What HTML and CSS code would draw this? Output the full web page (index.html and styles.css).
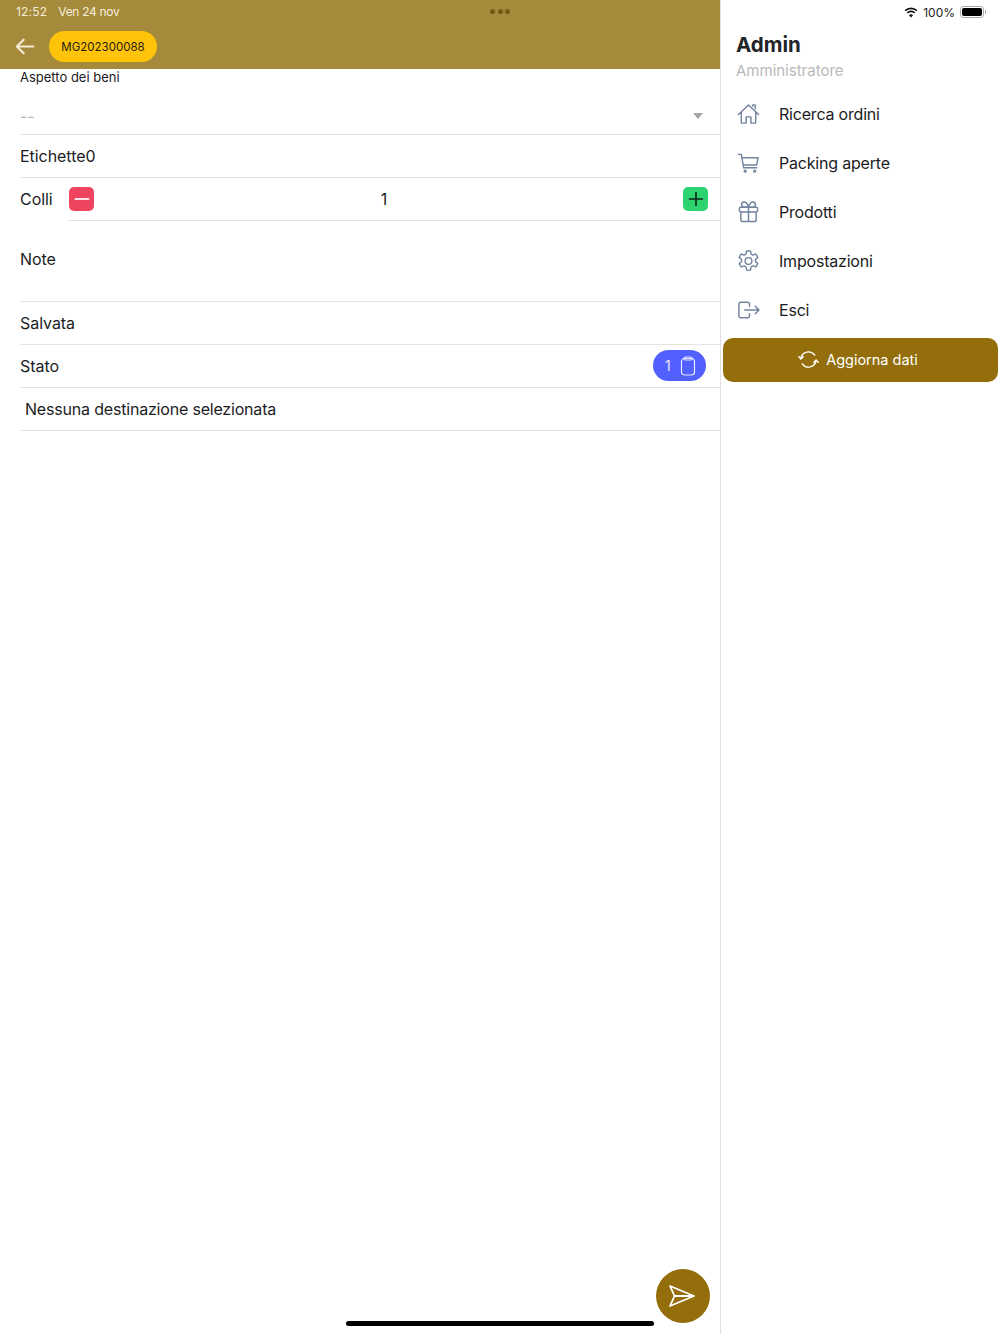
FILE: index.html
```html
<!DOCTYPE html>
<html lang="it">
<head>
    <meta charset="UTF-8">
    <meta name="viewport" content="width=device-width, initial-scale=1.0">
    <title>Packing</title>
    <link rel="stylesheet" href="styles.css">
</head>
<body>
    <div class="screen">
        <div class="main-pane">
            <header class="topbar">
                <div class="status-left"><span class="status-time">12:52</span><span class="status-date">Ven 24 nov</span></div>
                <div class="topbar-row">
                    <svg class="back-icon" viewBox="0 0 22 18" width="20" height="17" fill="none" stroke="#f3ead2" stroke-width="2.400" stroke-linecap="round" stroke-linejoin="round">
                        <path d="M20 9H2M9.500 1.500 2 9l7.500 7.500"/>
                    </svg>
                    <span class="order-pill">MG202300088</span>
                </div>
            </header>

            <div class="form">
                <div class="select-field">
                    <label class="select-label">Aspetto dei beni</label>
                    <div class="select-value">
                        <span class="placeholder">--</span>
                        <span class="caret"></span>
                    </div>
                </div>
                <div class="row">Etichette0</div>
                <div class="row row-colli">
                    <span class="colli-label">Colli</span>
                    <div class="stepper">
                        <button class="step step-minus"><svg viewBox="0 0 16 16" width="16" height="16" stroke="#fbe3e7" stroke-width="1.800" stroke-linecap="round"><path d="M1.500 8h13"/></svg></button>
                        <span class="step-value">1</span>
                        <button class="step step-plus"><svg viewBox="0 0 16 16" width="16" height="16" stroke="#10241a" stroke-width="1.600" stroke-linecap="round"><path d="M1.500 8h13M8 1.500v13"/></svg></button>
                    </div>
                </div>
                <div class="row row-note">Note</div>
                <div class="row">Salvata</div>
                <div class="row row-stato">
                    <span>Stato</span>
                    <span class="stato-pill">
                        1
                        <svg viewBox="0 0 16 20" width="16" height="20" fill="none" stroke="#e6e9ff" stroke-width="1.200" stroke-linejoin="round">
                            <rect x="1.500" y="2.500" width="13" height="16.500" rx="3"/>
                            <rect x="4" y="1" width="8" height="3" rx="1.500"/>
                        </svg>
                    </span>
                </div>
                <div class="row row-dest">Nessuna destinazione selezionata</div>
            </div>
        </div>

        <aside class="side-pane">
            <div class="status-right">
                <svg class="wifi" viewBox="0 0 16 12" width="14" height="11" fill="#111">
                    <path d="M8 2.200c2.300 0 4.400.9 6 2.400l1.300-1.400A10.600 10.600 0 0 0 8 .2 10.600 10.600 0 0 0 .7 3.200L2 4.600a8.700 8.700 0 0 1 6-2.400Z"/>
                    <path d="M8 5.700c1.300 0 2.500.5 3.500 1.400l1.300-1.400A7 7 0 0 0 8 3.800a7 7 0 0 0-4.800 1.900l1.300 1.400c1-.9 2.200-1.400 3.500-1.400Z"/>
                    <path d="M8 11.600 10.300 9A3.300 3.300 0 0 0 8 8.100c-.9 0-1.700.3-2.300.9L8 11.600Z"/>
                </svg>
                <span>100%</span>
                <span class="battery"><span class="battery-fill"></span></span>
            </div>
            <div class="user">
                <h2>Admin</h2>
                <p>Amministratore</p>
            </div>
            <ul class="menu">
                <li>
                    <svg viewBox="0 0 24 24" width="23" height="24"><path d="M1.500 12.500 12 2.500l10.500 10M4.500 10v11.500h5V15h5v6.500h5V10M16.500 4V2.500h2.500v4"/></svg>
                    Ricerca ordini
                </li>
                <li>
                    <svg viewBox="0 0 24 24" width="23" height="24"><path d="M1.500 3h3l2.500 14h13.500M5.200 6.500H22l-1.500 7.500H6.500"/><circle cx="8.500" cy="20.500" r="1"/><circle cx="18.500" cy="20.500" r="1"/></svg>
                    Packing aperte
                </li>
                <li>
                    <svg viewBox="0 0 24 24" width="23" height="24"><rect x="2.500" y="7" width="19" height="5" rx="1.500"/><path d="M4 12v8a2 2 0 0 0 2 2h12a2 2 0 0 0 2-2v-8M12 7v15M12 7S10.500 1.500 7.500 1.500a2.700 2.700 0 0 0 0 5.500H12Zm0 0s1.500-5.500 4.500-5.500a2.700 2.700 0 0 1 0 5.500H12Z"/></svg>
                    Prodotti
                </li>
                <li>
                    <svg viewBox="0 0 24 24" width="23" height="24"><circle cx="12" cy="12" r="3.500"/><path d="M10 1.500h4l.7 3.300 1.800 1 3.200-1.100 2 3.500-2.500 2.200v2.100l2.500 2.200-2 3.500-3.200-1.100-1.800 1-.7 3.400h-4l-.7-3.400-1.800-1-3.200 1.100-2-3.500 2.500-2.200v-2.100L2.300 8.200l2-3.500 3.200 1.100 1.800-1L10 1.500Z"/></svg>
                    Impostazioni
                </li>
                <li>
                    <svg viewBox="0 0 24 24" width="23" height="24"><path d="M13 8V6a2 2 0 0 0-2-2H4a2 2 0 0 0-2 2v12a2 2 0 0 0 2 2h7a2 2 0 0 0 2-2v-2M8 12h15M19 8l4 4-4 4"/></svg>
                    Esci
                </li>
            </ul>
            <button class="refresh">
                <svg viewBox="0 0 22 22" width="21" height="21" fill="none" stroke="#fff" stroke-width="1.500" stroke-linecap="round" stroke-linejoin="round">
                    <path d="M3 10a8 8 0 0 1 14.500-3.500M19 12a8 8 0 0 1-14.500 3.500"/>
                    <path d="m.8 8 2.200 2.500L5.400 8.200M21.200 14 19 11.500l-2.400 2.300"/>
                </svg>
                Aggiorna dati
            </button>
        </aside>

        <div class="multitask-dots"><i></i><i></i><i></i></div>
        <button class="fab">
            <svg viewBox="0 0 26 24" width="26" height="24" fill="none" stroke="#fff" stroke-width="1.800" stroke-linejoin="round">
                <path d="M1 2 25 12 1 22 5.500 12 1 2ZM5.500 12H25"/>
            </svg>
        </button>
        <div class="home-bar"></div>
    </div>
</body>
</html>
```

FILE: styles.css
```css
* { margin: 0; padding: 0; box-sizing: border-box; }

body {
    font-family: Inter, "Liberation Sans", sans-serif;
    color: #1c1c1e;
    background: #fff;
}

.screen {
    display: grid;
    grid-template-columns: 721px 1fr;
    width: 1000px;
    height: 1334px;
    position: relative;
    overflow: hidden;
}

.main-pane { border-right: 1px solid #e0e0e0; }

.topbar {
    height: 69px;
    background: #a68a3b;
    padding: 4px 0 0 16px;
}

.status-left {
    display: flex;
    gap: 11px;
    height: 16px;
    font-size: 12px;
    line-height: 16px;
    color: #f5eedb;
}

.status-time { letter-spacing: 0.2px; }
.status-date { letter-spacing: -0.3px; }

.topbar-row {
    display: flex;
    align-items: center;
    gap: 14px;
    margin: 11px 0 0 -1px;
}

.order-pill {
    display: flex;
    align-items: center;
    justify-content: center;
    width: 108px;
    height: 31px;
    border-radius: 16px;
    background: #ffc40a;
    color: #1d1a0c;
    font-size: 11.500px;
}

.form { padding-left: 20px; }

.select-field {
    height: 66px;
    border-bottom: 1px solid #e4e4e4;
}

.select-label {
    display: block;
    font-size: 13px;
    line-height: 17px;
}

.select-value {
    display: flex;
    justify-content: space-between;
    align-items: center;
    margin-top: 20px;
    padding-right: 17px;
    height: 20px;
}

.placeholder {
    color: #b8b8b8;
    font-size: 16px;
}

.caret {
    width: 0;
    height: 0;
    border-left: 5px solid transparent;
    border-right: 5px solid transparent;
    border-top: 6px solid #a5a5a5;
}

.row {
    display: flex;
    align-items: center;
    justify-content: space-between;
    height: 43px;
    font-size: 16px;
    letter-spacing: -0.05px;
    border-bottom: 1px solid #e4e4e4;
}

.row-colli {
    border-bottom: 0;
    justify-content: flex-start;
}

.colli-label {
    width: 48px;
    padding-bottom: 1px;
}

.stepper {
    flex: 1;
    height: 43px;
    display: flex;
    align-items: center;
    justify-content: space-between;
    padding: 0 12px 1px 1px;
    border-bottom: 1px solid #e4e4e4;
}

.step {
    display: flex;
    align-items: center;
    justify-content: center;
    width: 25px;
    height: 24px;
    border: 0;
    border-radius: 5px;
}

.step-minus { background: #ef4460; }
.step-plus { background: #2dd36f; }

.step-value {
    font-size: 16px;
    margin-right: 9px;
}

.row-note {
    height: 81px;
    align-items: flex-start;
    padding-top: 28px;
}

.row-stato { padding-right: 14px; }

.stato-pill {
    display: flex;
    align-items: center;
    justify-content: space-between;
    width: 53px;
    height: 31px;
    margin-bottom: 1px;
    padding: 0 10px 0 12px;
    border-radius: 16px;
    background: #5260ff;
    color: #e6e9ff;
    font-size: 14px;
}

.row-dest {
    padding-left: 5px;
    letter-spacing: -0.19px;
}

.side-pane { padding: 4px 2px 0; }

.status-right {
    display: flex;
    align-items: center;
    justify-content: flex-end;
    gap: 4px;
    height: 16px;
    padding-right: 14px;
    font-size: 12px;
    color: #222;
}

.wifi { margin-right: 1px; }

.battery {
    display: flex;
    position: relative;
    width: 24px;
    height: 12px;
    margin-left: 1px;
    padding: 1px;
    border: 1px solid #a5a5a5;
    border-radius: 3.500px;
}

/* battery nub */
.battery::after {
    content: '';
    position: absolute;
    right: -3px;
    top: 3px;
    width: 1.500px;
    height: 4px;
    border-radius: 0 1px 1px 0;
    background: #a5a5a5;
}

.battery-fill {
    flex: 1;
    background: #000;
    border-radius: 2px;
}

.user {
    padding: 12px 0 0 13px;
}

.user h2 {
    font-size: 20.500px;
    line-height: 26px;
    font-weight: 700;
    color: #222428;
}

.user p {
    margin-top: 3px;
    font-size: 15px;
    line-height: 20px;
    color: #b9b9bb;
}

.menu {
    list-style: none;
    margin-top: 9px;
}

.menu li {
    display: flex;
    align-items: center;
    gap: 19.500px;
    height: 48.800px;
    padding-left: 13.500px;
    font-size: 16px;
    letter-spacing: -0.2px;
    color: #1c1c1e;
}

.menu svg {
    fill: none;
    stroke: #73849f;
    stroke-width: 1.500;
    stroke-linecap: round;
    stroke-linejoin: round;
}

.refresh {
    display: flex;
    align-items: center;
    justify-content: center;
    gap: 7px;
    width: 275px;
    height: 44px;
    margin-top: 4px;
    padding-right: 5px;
    border: 0;
    border-radius: 10px;
    background: #936e0a;
    color: #fff;
    font-family: inherit;
    font-size: 14.500px;
}

.multitask-dots {
    position: absolute;
    top: 9px;
    left: 490px;
    display: flex;
    gap: 2.500px;
}

.multitask-dots i {
    width: 5px;
    height: 5px;
    border-radius: 50%;
    background: #735a12;
}

.fab {
    position: absolute;
    left: 656px;
    top: 1269px;
    display: flex;
    align-items: center;
    justify-content: center;
    width: 54px;
    height: 54px;
    padding-right: 2px;
    border: 0;
    border-radius: 50%;
    background: #936e0a;
}

.home-bar {
    position: absolute;
    left: 346px;
    top: 1321px;
    width: 308px;
    height: 5px;
    border-radius: 3px;
    background: #000;
}
```
